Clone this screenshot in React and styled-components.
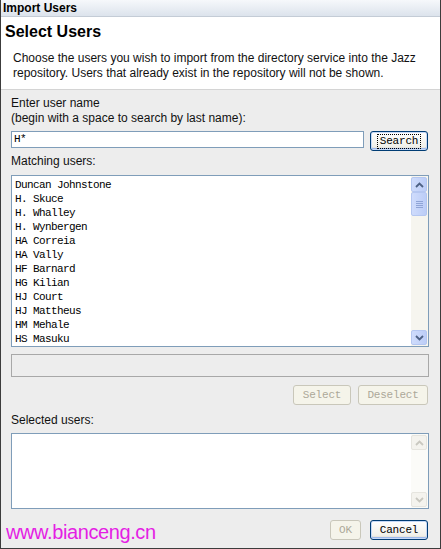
import React from 'react';
import styled, { createGlobalStyle } from 'styled-components';

const GlobalStyle = createGlobalStyle`
	* { box-sizing: border-box; }
	body {
		margin: 0;
		background: #ffffff;
		font-family: 'Liberation Sans', Arial, sans-serif;
	}
`;

const mono = `'Liberation Mono', 'Courier New', monospace`;

const Frame = styled.div`
	width: 441px;
	height: 549px;
	display: flex;
	flex-direction: column;
	background: #ededed;
	border: 1px solid #3c3c3c;
	border-top: none;
	overflow: hidden;
`;

const TitleBar = styled.div`
	height: 17px;
	padding: 0 2px;
	display: flex;
	align-items: center;
	font-size: 12px;
	font-weight: bold;
	color: #000;
	background: linear-gradient(#f6f8fb, #dce3ec);
	border-bottom: 1px solid #c4ccd6;
`;

const Header = styled.div`
	background: #ffffff;
	padding: 5px 4px 8px;
	border-bottom: 1px solid #d4d4d4;
`;

const Heading = styled.div`
	font-size: 16px;
	font-weight: bold;
	line-height: 20px;
	color: #000;
`;

const Description = styled.div`
	margin: 9px 0 0 8px;
	font-size: 12px;
	line-height: 15px;
	color: #111;
`;

const Body = styled.div`
	display: flex;
	flex-direction: column;
	padding: 6px 11px 0 10px;
	flex: 1;
`;

const Label = styled.div`
	font-size: 12px;
	line-height: 15px;
	color: #111;
	margin-top: ${(p) => p.$top || 0}px;
`;

const SearchRow = styled.div`
	display: flex;
	align-items: flex-start;
	gap: 6px;
	margin-top: 5px;
`;

const TextInput = styled.div`
	flex: 1;
	height: 17px;
	background: #fff;
	border: 1px solid #7f9db9;
	font-family: ${mono};
	font-size: 11px;
	letter-spacing: -0.6px;
	line-height: 15px;
	padding-left: 2px;
`;

const Button = styled.button`
	width: ${(p) => p.$w}px;
	height: 20px;
	padding: 0;
	font-family: ${mono};
	font-size: 11px;
	letter-spacing: -0.2px;
	border-radius: 3px;
	color: ${(p) => (p.disabled ? '#aca899' : '#000')};
	border: 1px solid ${(p) => (p.disabled ? '#c9c7ba' : '#003c74')};
	background: ${(p) =>
		p.disabled ? '#f5f4ea' : 'linear-gradient(#ffffff, #f0f0ea 80%, #d6d0c5)'};
	box-shadow: ${(p) =>
		p.$default ? 'inset 0 0 0 1px #c6d9f7, inset 0 -1px 0 1px #9db9eb' : 'none'};
	display: flex;
	align-items: center;
	justify-content: center;
	margin-right: 1px;
`;

const FocusRing = styled.span`
	border: 1px dotted #000;
	padding: 0 2px;
	line-height: 13px;
`;

const ListBox = styled.div`
	height: ${(p) => p.$h}px;
	margin-top: ${(p) => p.$top}px;
	background: #fff;
	border: 1px solid #7f9db9;
	display: flex;
`;

const Items = styled.div`
	flex: 1;
	padding: 2px 0 0 3px;
	overflow: hidden;
`;

const Item = styled.div`
	height: 14px;
	line-height: 14px;
	font-family: ${mono};
	font-size: 11px;
	letter-spacing: -0.6px;
	color: #000;
	white-space: pre;
`;

const ScrollBar = styled.div`
	width: 17px;
	padding: 1px 1px 1px 0;
	display: flex;
	flex-direction: column;
	background: ${(p) => (p.$off ? '#fbfbf8' : '#f6f5ef')};
`;

const ScrollBtn = styled.div`
	width: 16px;
	height: ${(p) => p.$h || 15}px;
	border-radius: 2px;
	display: flex;
	align-items: center;
	justify-content: center;
	border: 1px solid ${(p) => (p.$off ? '#e6e5df' : '#b5c7f1')};
	background: ${(p) =>
		p.$off ? '#f4f3ee' : 'linear-gradient(90deg, #cfdcfc, #bccdf7)'};
`;

const Track = styled.div`
	flex: 1;
`;

const Grip = styled.div`
	width: 7px;
	height: 1px;
	background: #8fa4d6;
	box-shadow: 0 2px 0 #8fa4d6, 0 4px 0 #8fa4d6, 0 6px 0 #8fa4d6;
	margin-top: -6px;
`;

const StatusBox = styled.div`
	height: 23px;
	margin-top: 7px;
	border: 1px solid #a8a8a8;
	background: #ededed;
`;

const ButtonRow = styled.div`
	display: flex;
	justify-content: flex-end;
	align-items: center;
	gap: 6px;
	margin-top: ${(p) => p.$top}px;
`;

const Footer = styled(ButtonRow)`
	margin-left: -5px;
	gap: 8px;
`;

const Watermark = styled.div`
	margin-right: auto;
	font-size: 20px;
	color: #e41ee4;
	letter-spacing: -0.4px;
	line-height: 22px;
	padding-top: 4px;
`;

const Arrow = ({ up, color }) => (
	<svg width="9" height="6" viewBox="0 0 9 6">
		<path
			d={up ? 'M1 5 L4.5 1.5 L8 5' : 'M1 1 L4.5 4.5 L8 1'}
			fill="none"
			stroke={color}
			strokeWidth="1.8"
		/>
	</svg>
);

const users = [
	'Duncan Johnstone',
	'H. Skuce',
	'H. Whalley',
	'H. Wynbergen',
	'HA Correia',
	'HA Vally',
	'HF Barnard',
	'HG Kilian',
	'HJ Court',
	'HJ Mattheus',
	'HM Mehale',
	'HS Masuku',
];

function Scroll({ off, thumb }) {
	const c = off ? '#c9c8c0' : '#4d6185';
	return (
		<ScrollBar $off={off}>
			<ScrollBtn $off={off}>
				<Arrow up color={c} />
			</ScrollBtn>
			{thumb && (
				<ScrollBtn $h={24}>
					<Grip />
				</ScrollBtn>
			)}
			<Track />
			<ScrollBtn $off={off}>
				<Arrow color={c} />
			</ScrollBtn>
		</ScrollBar>
	);
}

export default function App() {
	return (
		<>
			<GlobalStyle />
			<Frame>
				<TitleBar>Import Users</TitleBar>
				<Header>
					<Heading>Select Users</Heading>
					<Description>
						Choose the users you wish to import from the directory service into the Jazz
						repository. Users that already exist in the repository will not be shown.
					</Description>
				</Header>
				<Body>
					<Label>
						Enter user name
						<br />
						(begin with a space to search by last name):
					</Label>
					<SearchRow>
						<TextInput>H*</TextInput>
						<Button $w={58} $default>
							<FocusRing>Search</FocusRing>
						</Button>
					</SearchRow>
					<Label $top={3}>Matching users:</Label>
					<ListBox $h={172} $top={6}>
						<Items>
							{users.map((u) => (
								<Item key={u}>{u}</Item>
							))}
						</Items>
						<Scroll thumb />
					</ListBox>
					<StatusBox />
					<ButtonRow $top={8}>
						<Button $w={58} disabled>
							Select
						</Button>
						<Button $w={70} disabled>
							Deselect
						</Button>
					</ButtonRow>
					<Label $top={8}>Selected users:</Label>
					<ListBox $h={76} $top={5}>
						<Items />
						<Scroll off />
					</ListBox>
					<Footer $top={8}>
						<Watermark>www.bianceng.cn</Watermark>
						<Button $w={31} disabled>
							OK
						</Button>
						<Button $w={58} $default>
							Cancel
						</Button>
					</Footer>
				</Body>
			</Frame>
		</>
	);
}
